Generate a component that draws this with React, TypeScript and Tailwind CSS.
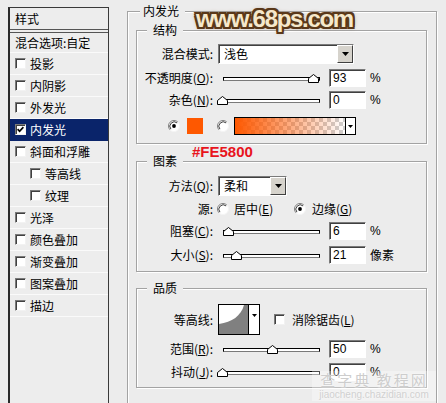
import React from "react";

const cjk = "font-['Noto_Sans_CJK_SC','Noto_Sans',sans-serif]";
const latin = "font-['Liberation_Sans',sans-serif]";

function Check({ checked = false }: { checked?: boolean }) {
  return (
    <span className="inline-flex w-[11px] h-[11px] shrink-0 items-center justify-center bg-white border border-t-[#7a7a7a] border-l-[#7a7a7a] border-r-[#f2f2f2] border-b-[#f2f2f2] shadow-[inset_1px_1px_0_#404040]">
      {checked && (
        <svg width="7" height="7" viewBox="0 0 7 7">
          <path d="M0.6 3.2 L2.6 5.3 L6.4 1.2" fill="none" stroke="#000" strokeWidth="1.7" />
        </svg>
      )}
    </span>
  );
}

function Radio({ on = false }: { on?: boolean }) {
  return (
    <svg width="12" height="12" viewBox="0 0 12 12" className="shrink-0">
      <circle cx="6" cy="6" r="5.5" fill="#fff" />
      <path d="M2.1 9.9 A5.5 5.5 0 0 1 9.9 2.1" fill="none" stroke="#808080" />
      <path d="M2.9 9.1 A4.4 4.4 0 0 1 9.1 2.9" fill="none" stroke="#404040" />
      <path d="M9.9 2.1 A5.5 5.5 0 0 1 2.1 9.9" fill="none" stroke="#f4f4f4" />
      {on && <circle cx="6" cy="6" r="1.9" fill="#000" />}
    </svg>
  );
}

function Slider({ pos }: { pos: number }) {
  return (
    <div className="relative w-[104px] h-[18px] shrink-0">
      <div className="absolute left-[5px] right-[2px] top-[8px] h-[4px] border border-black border-b-[#7a7a7a] bg-white" />
      <svg className="absolute top-[5px]" style={{ left: pos }} width="11" height="9" viewBox="0 0 11 9">
        <path d="M0.5 8.5 V4.5 L5.5 0.5 L10.5 4.5 V8.5 Z" fill="#fff" stroke="#000" />
      </svg>
    </div>
  );
}

function Num({ v }: { v: string }) {
  return (
    <div className={`w-[37px] h-[18px] shrink-0 bg-white border border-t-[#7a7a7a] border-l-[#7a7a7a] border-r-white border-b-white shadow-[inset_1px_1px_0_#404040] pl-[3px] text-[12px] leading-[16px] ${latin}`}>
      {v}
    </div>
  );
}

function Arrow() {
  return (
    <svg width="7" height="4" viewBox="0 0 7 4">
      <path d="M0 0 H7 L3.5 4 Z" fill="#000" />
    </svg>
  );
}

function Select({ text, className }: { text: string; className: string }) {
  return (
    <div className={`flex h-[20px] shrink-0 bg-white border border-t-[#7a7a7a] border-l-[#7a7a7a] border-r-white border-b-white shadow-[inset_1px_1px_0_#404040] ${className}`}>
      <span className="flex-1 pl-[5px] leading-[18px]">{text}</span>
      <span className="w-[16px] h-full flex items-center justify-center bg-[#d6d3cc] border border-t-white border-l-white border-r-[#404040] border-b-[#404040]">
        <Arrow />
      </span>
    </div>
  );
}

function Group({ title, className, children }: { title: string; className: string; children: React.ReactNode }) {
  return (
    <div className={`relative border border-[#a3a3a3] shadow-[inset_1px_1px_0_#fff,1px_1px_0_#fff] ${className}`}>
      <span className="absolute -top-[9px] left-[10px] px-[6px] bg-[#ececec] leading-[16px]">{title}</span>
      {children}
    </div>
  );
}

function Label({ children }: { children: React.ReactNode }) {
  return <span className="w-[76px] shrink-0 text-right leading-[16px]">{children}</span>;
}

const layers: { name: string; nested?: boolean; on?: boolean }[] = [
  { name: "投影" },
  { name: "内阴影" },
  { name: "外发光" },
  { name: "内发光", on: true },
  { name: "斜面和浮雕" },
  { name: "等高线", nested: true },
  { name: "纹理", nested: true },
  { name: "光泽" },
  { name: "颜色叠加" },
  { name: "渐变叠加" },
  { name: "图案叠加" },
  { name: "描边" },
];

function LeftPanel() {
  return (
    <div className="ml-[8px] mt-[7px] w-[101px] h-[420px] shrink-0 border border-[#3a3a3a] border-l-2 border-l-[#2a2a2a] bg-[#ededed]">
      <div className="h-[22px] flex items-center pl-[5px] border-b border-[#555]">样式</div>
      <div className="h-[3px] border-b border-[#555]" />
      <div className="h-[20px] flex items-center pl-[5px] border-b border-[#fafafa]">混合选项:自定</div>
      {layers.map((l) => (
        <div
          key={l.name}
          className={`h-[22px] flex items-center gap-[4px] border-b ${l.nested ? "pl-[20px]" : "pl-[5px]"} ${
            l.on ? "bg-[#0a246a] text-white border-[#0a246a]" : "border-[#fafafa]"
          }`}
        >
          <Check checked={l.on} />
          <span>{l.name}</span>
        </div>
      ))}
    </div>
  );
}

function RightPanel() {
  return (
    <div className="relative ml-[18px] mt-[11px] w-[310px] h-[420px] shrink-0 border border-[#a3a3a3] shadow-[inset_1px_1px_0_#fff,1px_1px_0_#fff] pt-[18px] pl-[8px] pr-[9px] flex flex-col">
      <span className="absolute -top-[9px] left-[12px] pl-[3px] pr-[6px] bg-[#ececec] leading-[16px]">内发光</span>

      <Group title="结构" className="pt-[13px] pb-[8px] flex flex-col">
        <div className="flex items-center h-[20px] gap-[5px]">
          <Label>混合模式:</Label>
          <Select text="浅色" className="w-[136px]" />
        </div>
        <div className="flex items-center h-[18px] mt-[5px]">
          <Label>
            不透明度(<u>O</u>):
          </Label>
          <span className="ml-[5px]">
            <Slider pos={90} />
          </span>
          <span className="ml-[7px]">
            <Num v="93" />
          </span>
          <span className={`ml-[4px] ${latin}`}>%</span>
        </div>
        <div className="flex items-center h-[18px] mt-[4px]">
          <Label>
            杂色(<u>N</u>):
          </Label>
          <span className="ml-[5px]">
            <Slider pos={-1} />
          </span>
          <span className="ml-[7px]">
            <Num v="0" />
          </span>
          <span className={`ml-[4px] ${latin}`}>%</span>
        </div>
        <div className="flex items-center h-[18px] mt-[8px] pl-[31px]">
          <Radio on />
          <span className="ml-[7px] w-[16px] h-[16px] bg-[#fe5800]" />
          <span className="ml-[14px]">
            <Radio />
          </span>
          <div className="ml-[5px] w-[122px] h-[18px] flex border border-black">
            <div className="flex-1 bg-[repeating-conic-gradient(#cfcfcf_0_25%,#ffffff_0_50%)] [background-size:8px_8px]">
              <div className="w-full h-full bg-[linear-gradient(to_right,#fe5800,rgba(254,88,0,0.55)_45%,rgba(254,88,0,0))]" />
            </div>
            <div className="w-[10px] border-l border-black bg-white flex items-center justify-center">
              <svg width="5" height="3" viewBox="0 0 5 3">
                <path d="M0 0 H5 L2.5 3 Z" fill="#000" />
              </svg>
            </div>
          </div>
        </div>
      </Group>

      <Group title="图素" className="mt-[17px] pt-[14px] pb-[7px] flex flex-col">
        <div className="flex items-center h-[20px] gap-[5px]">
          <Label>
            方法(<u>Q</u>):
          </Label>
          <Select text="柔和" className="w-[69px]" />
        </div>
        <div className="flex items-center h-[16px] mt-[5px]">
          <Label>源:</Label>
          <div className="ml-[4px] w-[77px] flex items-center gap-[5px]">
            <Radio />
            <span>
              居中(<u>E</u>)
            </span>
          </div>
          <div className="flex items-center gap-[6px]">
            <Radio on />
            <span>
              边缘(<u>G</u>)
            </span>
          </div>
        </div>
        <div className="flex items-center h-[18px] mt-[5px]">
          <Label>
            阻塞(<u>C</u>):
          </Label>
          <span className="ml-[5px]">
            <Slider pos={5} />
          </span>
          <span className="ml-[7px]">
            <Num v="6" />
          </span>
          <span className={`ml-[4px] ${latin}`}>%</span>
        </div>
        <div className="flex items-center h-[18px] mt-[6px]">
          <Label>
            大小(<u>S</u>):
          </Label>
          <span className="ml-[5px]">
            <Slider pos={13} />
          </span>
          <span className="ml-[7px]">
            <Num v="21" />
          </span>
          <span className="ml-[4px]">像素</span>
        </div>
      </Group>

      <Group title="品质" className="mt-[16px] pt-[15px] pb-[6px] flex flex-col">
        <div className="flex items-center h-[31px]">
          <Label>等高线:</Label>
          <div className="ml-[5px] w-[42px] h-[31px] flex border border-black">
            <svg width="29" height="29" viewBox="0 0 29 29" className="shrink-0">
              <rect width="29" height="29" fill="#808080" />
              <path d="M0 0 H25 C22 11 13 17 0 19 Z" fill="#fff" />
            </svg>
            <div className="flex-1 border-l border-black bg-white flex justify-center pt-[9px]">
              <svg width="5" height="3" viewBox="0 0 5 3">
                <path d="M0 0 H5 L2.5 3 Z" fill="#000" />
              </svg>
            </div>
          </div>
          <span className="ml-[14px]">
            <Check />
          </span>
          <span className="ml-[7px]">
            消除锯齿(<u>L</u>)
          </span>
        </div>
        <div className="flex items-center h-[18px] mt-[5px]">
          <Label>
            范围(<u>R</u>):
          </Label>
          <span className="ml-[5px]">
            <Slider pos={49} />
          </span>
          <span className="ml-[7px]">
            <Num v="50" />
          </span>
          <span className={`ml-[4px] ${latin}`}>%</span>
        </div>
        <div className="flex items-center h-[18px] mt-[5px]">
          <Label>
            抖动(<u>J</u>):
          </Label>
          <span className="ml-[5px]">
            <Slider pos={-1} />
          </span>
          <span className="ml-[7px]">
            <Num v="0" />
          </span>
          <span className={`ml-[4px] ${latin}`}>%</span>
        </div>
      </Group>
    </div>
  );
}

export default function App() {
  return (
    <div className={`relative w-[446px] h-[403px] overflow-hidden bg-[#ececec] text-[12px] text-black flex items-start ${cjk}`}>
      <LeftPanel />
      <RightPanel />

      <div
        className={`absolute left-[196px] top-[3px] whitespace-nowrap text-[24px] font-bold tracking-[-1.3px] leading-[32px] text-[#f5e8cb] ${latin} [text-shadow:2px_0_#5a3819,-2px_0_#5a3819,0_2px_#5a3819,0_-2px_#5a3819,2px_2px_#5a3819,-2px_-2px_#5a3819,2px_-2px_#5a3819,-2px_2px_#5a3819,0_0_5px_#8a6a4a]`}
      >
        www.68ps.com
      </div>

      <div className={`absolute left-[192px] top-[143px] text-[15px] font-bold leading-[18px] text-[#e8141c] ${latin}`}>#FE5800</div>

      <div className="absolute left-[312px] top-[371px] w-[124px] flex flex-col items-center whitespace-nowrap bg-white/30">
        <div className="text-[15px] leading-[18px] tracking-[2px] text-[#cdcdcd] [text-shadow:0_0_2px_#fff]">查字典 教程网</div>
        <div className={`text-[10px] leading-[12px] text-[#d0d0d0] ${latin} [text-shadow:0_0_2px_#fff]`}>jiaocheng.chazidian.com</div>
      </div>
    </div>
  );
}
